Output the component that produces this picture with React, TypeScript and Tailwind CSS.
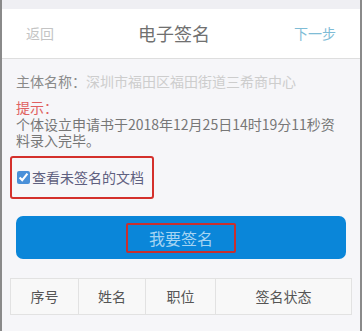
import React from "react";

const font = {
  fontFamily: '"Noto Sans CJK SC", "Noto Sans", sans-serif',
};

const App = () => {
  return (
    <div
      className="w-[362px] h-[331px] overflow-hidden bg-[#f6f6f9] border-l-2 border-r-2 border-[#8a8a8a] flex flex-col"
      style={font}
    >
      <div className="h-[9px] bg-[#efeff3]" />
      <div className="h-[50px] bg-white border-b border-[#dedede] flex items-center justify-between pl-[24px] pr-[24px]">
        <span className="text-[14px] text-[#c4c4c4]">返回</span>
        <span className="text-[18px] text-[#707070]">电子签名</span>
        <span className="text-[14px] text-[#7fbcd6]">下一步</span>
      </div>

      <div className="flex flex-col px-[14px] pt-[12px]">
        <p className="text-[14px] leading-[20px] text-[#8a8a8a]">
          主体名称：<span className="text-[#cdcdcd]">深圳市福田区福田街道三希商中心</span>
        </p>
        <p className="mt-[7px] text-[14px] leading-[18px] text-[#e06060]">提示：</p>
        <p className="text-[14px] leading-[16px] text-[#777]">
          个体设立申请书于2018年12月25日14时19分11秒资料录入完毕。
        </p>

        <div className="mt-[8px] ml-[-6px] w-[144px] h-[43px] border-2 border-[#d4302c] rounded-[3px] flex items-center pl-[5px]">
          <input
            type="checkbox"
            defaultChecked
            className="w-[13px] h-[13px] m-0 accent-[#4a90d9]"
          />
          <span className="ml-[2px] text-[14px] text-[#5f6080]">查看未签名的文档</span>
        </div>

        <button className="mt-[17px] w-[330px] h-[43px] bg-[#0a86d9] rounded-[7px] flex items-center justify-center">
          <span className="w-[110px] h-[30px] border-2 border-[#c8302e] rounded-[2px] flex items-center justify-center text-[16px] text-[#a6d4f2]">
            我要签名
          </span>
        </button>

        <div className="mt-[19px] ml-[-6px] w-[342px] h-[37px] grid grid-cols-[68px_67px_70px_1fr] bg-[#f8f8f8] border border-[#e2e2e2] text-[14px] text-[#555]">
          <div className="flex items-center justify-center border-r border-[#e2e2e2]">序号</div>
          <div className="flex items-center justify-center border-r border-[#e2e2e2]">姓名</div>
          <div className="flex items-center justify-center border-r border-[#e2e2e2]">职位</div>
          <div className="flex items-center justify-center">签名状态</div>
        </div>
      </div>
    </div>
  );
};

export default App;
